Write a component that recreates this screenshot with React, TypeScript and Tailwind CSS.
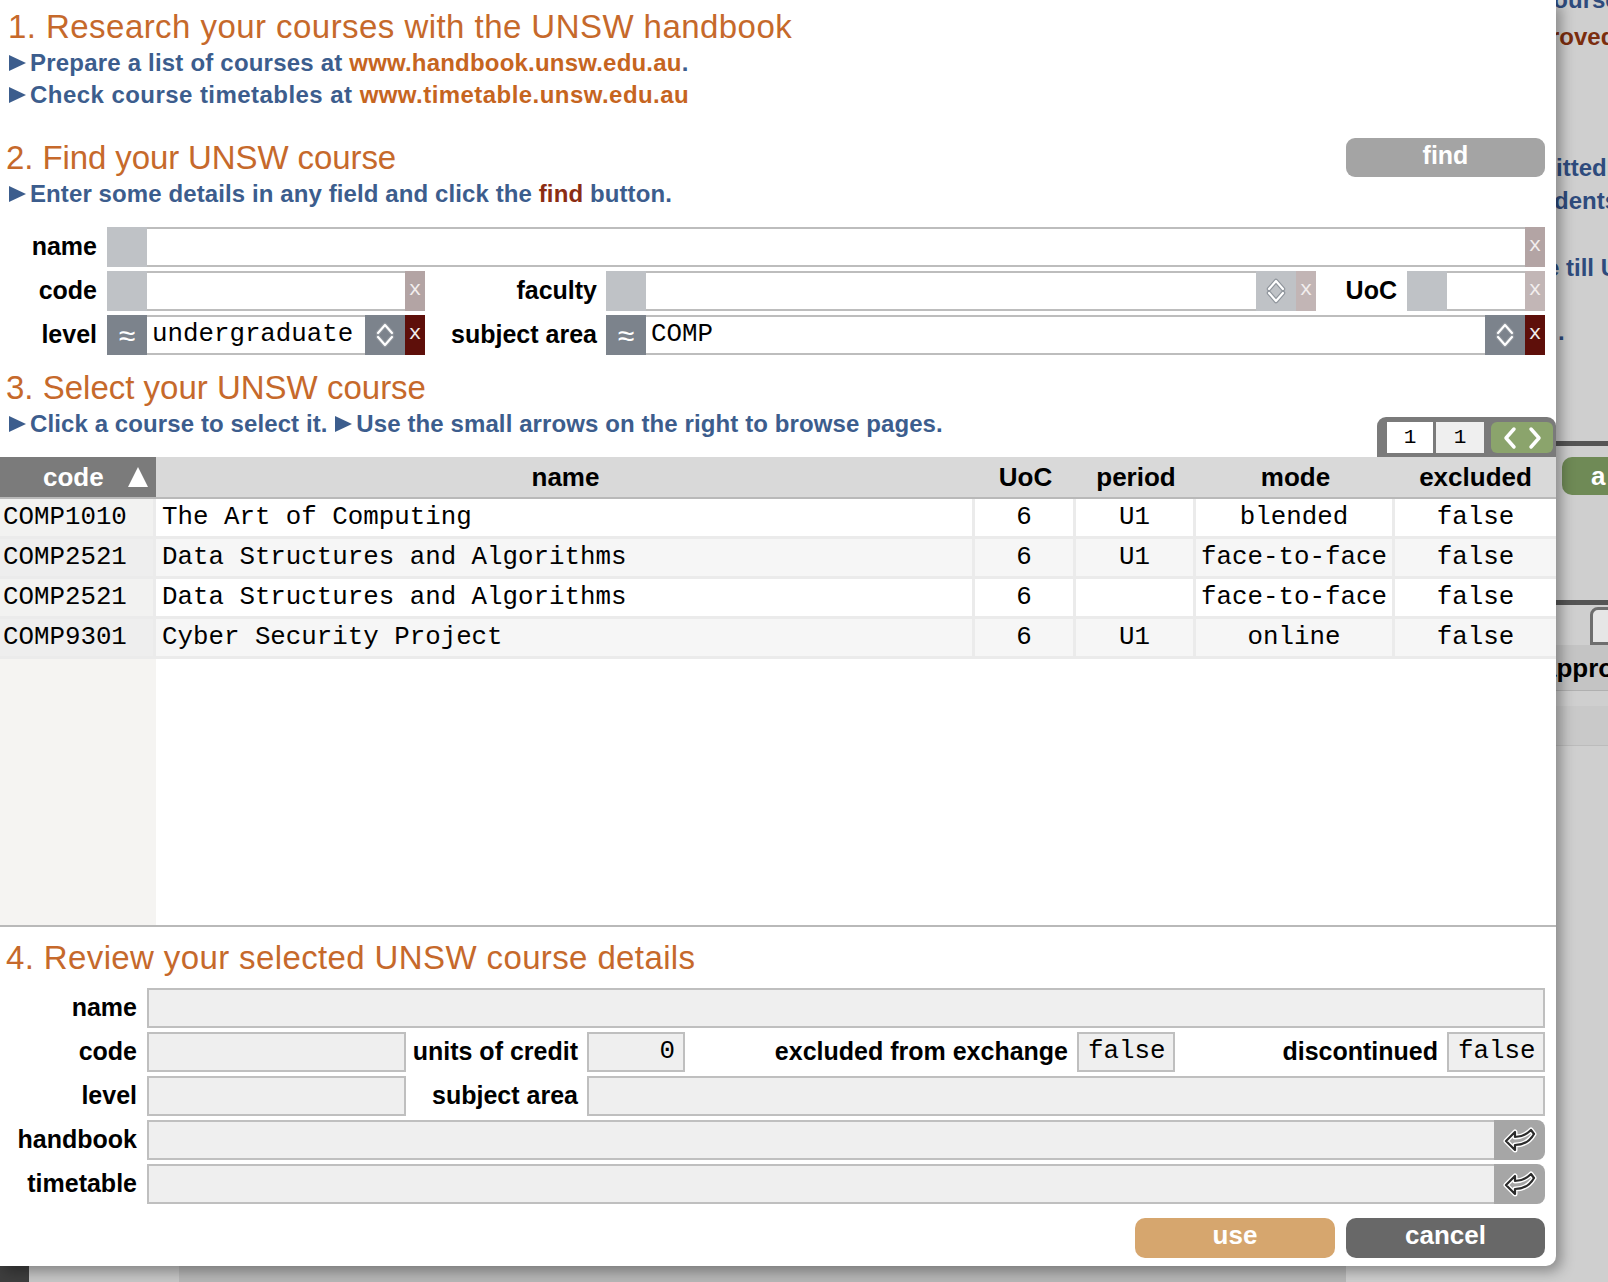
import React from 'react'

const sans = "font-['Liberation_Sans',Arial,sans-serif]"
const mono = "font-['Liberation_Mono','DejaVu_Sans_Mono',monospace]"

function Arrow() {
  return (
    <svg width="19" height="18" viewBox="0 0 19 18" className="inline-block mr-[3px] -mt-[3px] align-middle">
      <path d="M1 1 L18 9 L1 17 Z" fill="#3c5d8d" />
    </svg>
  )
}

function UpDown() {
  return (
    <svg width="20" height="30" viewBox="0 0 20 30" fill="none">
      <path d="M3 13 L10 5 L17 13" stroke="#8f959c" strokeWidth="4.5" strokeLinecap="round" strokeLinejoin="round" />
      <path d="M3 17 L10 25 L17 17" stroke="#8f959c" strokeWidth="4.5" strokeLinecap="round" strokeLinejoin="round" />
      <path d="M3 13 L10 5 L17 13" stroke="#ffffff" strokeWidth="2.2" strokeLinecap="round" strokeLinejoin="round" />
      <path d="M3 17 L10 25 L17 17" stroke="#ffffff" strokeWidth="2.2" strokeLinecap="round" strokeLinejoin="round" />
    </svg>
  )
}

function LinkIcon() {
  const d = 'M3 16 L12 7 L12 12 C18 12 23 10 28 5 L31 9 C27 16 20 20 12 20 L12 25 Z'
  return (
    <svg width="34" height="30" viewBox="0 0 34 30" fill="none">
      <path d={d} stroke="#ffffff" strokeWidth="5" strokeLinejoin="round" />
      <path d={d} stroke="#2b2b2b" strokeWidth="2.2" strokeLinejoin="round" />
    </svg>
  )
}

type FieldProps = {
  className?: string
  approx?: boolean
  active?: boolean
  updown?: boolean
  value?: string
  xColor?: string
}

function FilterField({ className = '', approx = false, active = false, updown = false, value = '', xColor = 'bg-[#b3a4a4]' }: FieldProps) {
  const blockBg = active ? 'bg-[#7c838c]' : 'bg-[#bfc2c6]'
  return (
    <div className={`flex h-[40px] ${className}`}>
      <div className={`w-[40px] shrink-0 flex items-center justify-center text-white text-[30px] ${blockBg}`}>
        {approx ? '≈' : ''}
      </div>
      <div className={`flex-1 min-w-0 bg-white border-y-2 border-[#bdbdbd] flex items-center pl-[5px] text-black text-[25.8px] ${mono}`}>
        {value}
      </div>
      {updown && (
        <div className={`w-[40px] shrink-0 flex items-center justify-center ${blockBg}`}>
          <UpDown />
        </div>
      )}
      <div className={`w-[20px] shrink-0 flex items-center justify-center text-[#f2eeee] text-[21px] pb-[3px] ${mono} ${active ? 'bg-[#5e0f0a]' : xColor}`}>
        x
      </div>
    </div>
  )
}

function ReadField({ className = '', value = '', align = 'left' }: { className?: string; value?: string; align?: 'left' | 'right' }) {
  return (
    <div
      className={`h-[40px] bg-[#efefef] border-2 border-[#bfbfbf] flex items-center text-black text-[25.8px] ${mono} ${
        align === 'right' ? 'justify-end pr-[8px]' : 'pl-[9px]'
      } ${className}`}
    >
      {value}
    </div>
  )
}

function LinkField() {
  return (
    <div className="flex-1 flex h-[40px]">
      <div className="flex-1 bg-[#efefef] border-2 border-r-0 border-[#bfbfbf]" />
      <div className="w-[51px] bg-[#a6a6a6] rounded-r-[8px] flex items-center justify-center">
        <LinkIcon />
      </div>
    </div>
  )
}

const courses = [
  { code: 'COMP1010', name: 'The Art of Computing', uoc: '6', period: 'U1', mode: 'blended', excluded: 'false' },
  { code: 'COMP2521', name: 'Data Structures and Algorithms', uoc: '6', period: 'U1', mode: 'face-to-face', excluded: 'false' },
  { code: 'COMP2521', name: 'Data Structures and Algorithms', uoc: '6', period: '', mode: 'face-to-face', excluded: 'false' },
  { code: 'COMP9301', name: 'Cyber Security Project', uoc: '6', period: 'U1', mode: 'online', excluded: 'false' },
]

export default function App() {
  const title = `text-[33px] leading-[40px] text-[#c6692b] ${sans}`
  const hint = `text-[24px] font-bold text-[#3c5d8d] ${sans}`
  const label = `text-[25px] font-bold text-black text-right shrink-0 ${sans}`

  return (
    <div className={`relative w-[1608px] h-[1282px] overflow-hidden bg-[#cfcfcf] ${sans}`}>
      {/* page behind the dialog */}
      <div className="absolute inset-0 text-[24px] font-bold text-[#2e4b7d] whitespace-nowrap">
        <div className="absolute left-[1540px] top-[-14px] leading-[28px]">course</div>
        <div className="absolute left-[1550px] top-[23px] leading-[28px] text-[#7b2d0e]">roved</div>
        <div className="absolute left-[1556px] top-[154px] leading-[28px]">itted.</div>
        <div className="absolute left-[1554px] top-[187px] leading-[28px]">dents</div>
        <div className="absolute left-[1546px] top-[254px] leading-[28px]">e till U</div>
        <div className="absolute left-[1558px] top-[318px] leading-[28px]">.</div>
        <div className="absolute left-[1540px] top-[441px] w-[80px] h-[5px] bg-[#555555]" />
        <div className="absolute left-[1562px] top-[457px] w-[60px] h-[38px] rounded-l-[10px] bg-[#6f8a56] text-white text-[26px] leading-[38px] pl-[29px]">a</div>
        <div className="absolute left-[1540px] top-[600px] w-[80px] h-[5px] bg-[#555555]" />
        <div className="absolute left-[1590px] top-[607px] w-[30px] h-[38px] rounded-tl-[8px] border-[3px] border-[#6e6e6e] bg-[#e6e6e6]" />
        <div className="absolute left-[1540px] top-[645px] w-[80px] h-[46px] bg-[#c4c4c4] border-b border-[#b0b0b0] text-black text-[26px] leading-[46px] pl-[2px]">appro</div>
        <div className="absolute left-[1540px] top-[706px] w-[80px] h-[40px] bg-[#c9c9c9] border-b border-[#bcbcbc]" />
        <div className="absolute left-0 top-[1240px] w-[29px] h-[42px] bg-[#3e3e3e]" />
        <div className="absolute left-[29px] top-[1240px] w-[150px] h-[42px] bg-[#c7c7c7]" />
        <div className="absolute left-[179px] top-[1240px] w-[1167px] h-[42px] bg-[#b7b7b7]" />
      </div>

      {/* dialog */}
      <div className="absolute left-0 top-0 w-[1556px] h-[1266px] bg-white rounded-br-[10px] shadow-[5px_5px_14px_rgba(0,0,0,0.35)] flex flex-col">
        {/* 1 */}
        <div className="pl-[8px] pt-[7px]">
          <div className={`${title} tracking-[0.45px]`}>1. Research your courses with the UNSW handbook</div>
          <div className={`${hint} leading-[32px] tracking-[0.2px]`}>
            <Arrow />Prepare a list of courses at <span className="text-[#c6651f]">www.handbook.unsw.edu.au</span>.
          </div>
          <div className={`${hint} leading-[32px] tracking-[0.45px]`}>
            <Arrow />Check course timetables at <span className="text-[#c6651f]">www.timetable.unsw.edu.au</span>
          </div>
        </div>

        {/* 2 */}
        <div className="flex items-center justify-between pl-[6px] pr-[11px] mt-[26px] h-[41px]">
          <div className={`${title} tracking-[-0.1px]`}>2. Find your UNSW course</div>
          <button className="w-[199px] h-[39px] rounded-[9px] bg-[#a4a4a4] text-white text-[25px] font-bold leading-[30px] pb-[6px]">find</button>
        </div>
        <div className={`${hint} leading-[32px] pl-[8px] tracking-[0.1px]`}>
          <Arrow />Enter some details in any field and click the <span className="text-[#8b2c12]">find</span> button.
        </div>

        <div className="flex flex-col gap-[4px] mt-[17px] pr-[11px]">
          <div className="flex items-center">
            <div className={`${label} w-[97px]`}>name</div>
            <FilterField className="ml-[10px] flex-1" />
          </div>
          <div className="flex items-center">
            <div className={`${label} w-[97px]`}>code</div>
            <FilterField className="ml-[10px] w-[318px]" />
            <div className={`${label} w-[172px]`}>faculty</div>
            <FilterField className="ml-[9px] w-[710px]" updown xColor="bg-[#c2b5b5]" />
            <div className={`${label} w-[81px]`}>UoC</div>
            <FilterField className="ml-[10px] flex-1" xColor="bg-[#c2b6b6]" />
          </div>
          <div className="flex items-center">
            <div className={`${label} w-[97px]`}>level</div>
            <FilterField className="ml-[10px] w-[318px]" approx active updown value="undergraduate" />
            <div className={`${label} w-[172px]`}>subject area</div>
            <FilterField className="ml-[9px] flex-1" approx active updown value="COMP" />
          </div>
        </div>

        {/* 3 */}
        <div className={`${title} pl-[6px] mt-[13px]`}>3. Select your UNSW course</div>
        <div className="flex justify-between h-[49px]">
          <div className={`${hint} leading-[32px] pl-[8px] tracking-[0.1px]`}>
            <Arrow />Click a course to select it. <Arrow />Use the small arrows on the right to browse pages.
          </div>
          <div className="self-end flex h-[40px] w-[179px] bg-[#7a7a7a] rounded-t-[9px] pt-[5px] pb-[4px] pl-[10px] pr-[3px]">
            <div className={`w-[46px] bg-white flex items-center justify-center text-[21px] ${mono}`}>1</div>
            <div className={`w-[48px] ml-[3px] bg-[#efefef] flex items-center justify-center text-[21px] ${mono}`}>1</div>
            <div className="w-[62px] ml-[7px] bg-[#8ba46c] rounded-[6px] flex items-center justify-around px-[6px]">
              <svg width="16" height="24" viewBox="0 0 16 24" fill="none">
                <path d="M12 3 L4 12 L12 21" stroke="#ffffff" strokeWidth="3.5" strokeLinejoin="round" strokeLinecap="round" />
              </svg>
              <svg width="16" height="24" viewBox="0 0 16 24" fill="none">
                <path d="M4 3 L12 12 L4 21" stroke="#ffffff" strokeWidth="3.5" strokeLinejoin="round" strokeLinecap="round" />
              </svg>
            </div>
          </div>
        </div>

        {/* table */}
        <div className="flex flex-col border-b-2 border-[#b9b9b9]">
          <div className={`flex h-[42px] bg-[#d9d9d9] border-b-2 border-[#b9b9b9] text-[26px] font-bold text-black leading-[40px] ${sans}`}>
            <div className="w-[156px] bg-[#7b7b7b] text-white flex items-center gap-[23px] pl-[43px]">
              <span>code</span>
              <svg width="22" height="22" viewBox="0 0 22 22">
                <path d="M11 1 L21 21 L1 21 Z" fill="#ffffff" />
              </svg>
            </div>
            <div className="w-[819px] text-center">name</div>
            <div className="w-[101px] text-center">UoC</div>
            <div className="w-[120px] text-center">period</div>
            <div className="w-[199px] text-center">mode</div>
            <div className="flex-1 text-center">excluded</div>
          </div>
          <div className={`flex flex-col gap-[3px] pb-[3px] bg-[#ebebeb] text-[25.8px] text-black ${mono}`}>
            {courses.map((c, i) => {
              const cell = i % 2 === 0 ? 'bg-white' : 'bg-[#f6f6f6]'
              const codeCell = i % 2 === 0 ? 'bg-[#f2f2f1]' : 'bg-[#eeeeee]'
              return (
                <div key={i} className="flex gap-[3px] h-[37px] leading-[37px]">
                  <div className={`w-[153px] pl-[3px] ${codeCell}`}>{c.code}</div>
                  <div className={`w-[816px] pl-[6px] ${cell}`}>{c.name}</div>
                  <div className={`w-[98px] text-center ${cell}`}>{c.uoc}</div>
                  <div className={`w-[117px] text-center ${cell}`}>{c.period}</div>
                  <div className={`w-[196px] text-center ${cell}`}>{c.mode}</div>
                  <div className={`flex-1 text-center ${cell}`}>{c.excluded}</div>
                </div>
              )
            })}
          </div>
          <div className="flex h-[266px]">
            <div className="w-[156px] bg-[#f5f4f2]" />
            <div className="flex-1 bg-white" />
          </div>
        </div>

        {/* 4 */}
        <div className={`${title} pl-[6px] mt-[11px] tracking-[0.38px]`}>4. Review your selected UNSW course details</div>
        <div className="flex flex-col gap-[4px] mt-[10px] pr-[11px]">
          <div className="flex items-center">
            <div className={`${label} w-[137px]`}>name</div>
            <ReadField className="ml-[10px] flex-1" />
          </div>
          <div className="flex items-center">
            <div className={`${label} w-[137px]`}>code</div>
            <ReadField className="ml-[10px] w-[259px]" />
            <div className={`${label} w-[172px]`}>units of credit</div>
            <ReadField className="ml-[9px] w-[98px]" value="0" align="right" />
            <div className={`${label} w-[383px]`}>excluded from exchange</div>
            <ReadField className="ml-[9px] w-[98px]" value="false" />
            <div className={`${label} w-[263px]`}>discontinued</div>
            <ReadField className="ml-[9px] flex-1" value="false" />
          </div>
          <div className="flex items-center">
            <div className={`${label} w-[137px]`}>level</div>
            <ReadField className="ml-[10px] w-[259px]" />
            <div className={`${label} w-[172px]`}>subject area</div>
            <ReadField className="ml-[9px] flex-1" />
          </div>
          <div className="flex items-center">
            <div className={`${label} w-[137px]`}>handbook</div>
            <div className="ml-[10px] flex-1 flex">
              <LinkField />
            </div>
          </div>
          <div className="flex items-center">
            <div className={`${label} w-[137px]`}>timetable</div>
            <div className="ml-[10px] flex-1 flex">
              <LinkField />
            </div>
          </div>
        </div>

        <div className="flex justify-end gap-[11px] pr-[11px] mt-[14px]">
          <button className="w-[200px] h-[40px] rounded-[10px] bg-[#d6a66e] text-white text-[26px] font-bold leading-[30px] pb-[6px]">use</button>
          <button className="w-[199px] h-[40px] rounded-[10px] bg-[#686868] text-white text-[26px] font-bold leading-[30px] pb-[6px]">cancel</button>
        </div>
      </div>
    </div>
  )
}
